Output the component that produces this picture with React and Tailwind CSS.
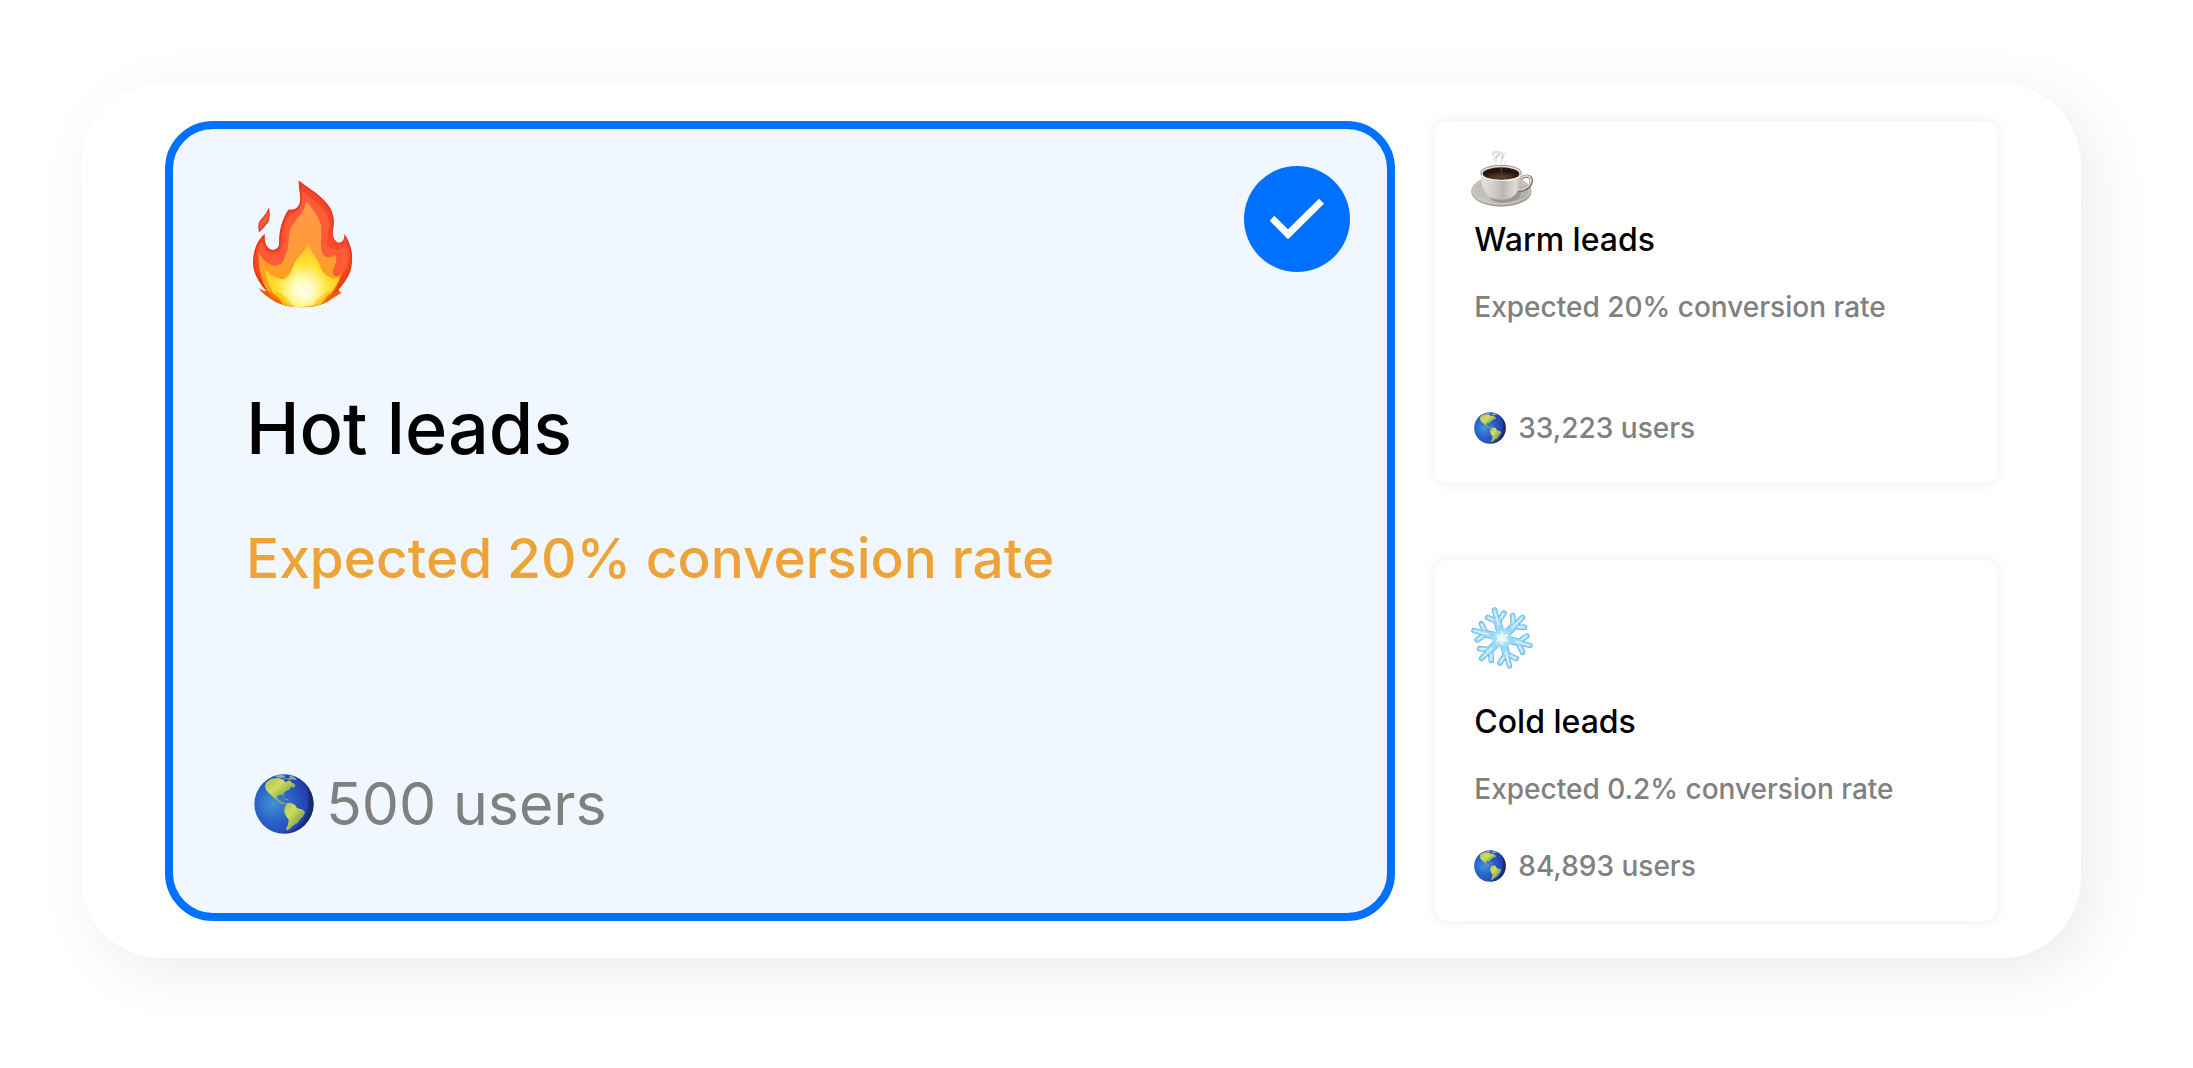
import React, { useState } from 'react';

function FireIcon({ className }) {
    return (
        <svg viewBox="66 56 302 388" className={className} aria-hidden="true">
            <defs>
                <linearGradient id="fireOuter" x1="0" y1="0" x2="0" y2="1">
                    <stop offset="0" stopColor="#f0452a" />
                    <stop offset="0.55" stopColor="#f9482a" />
                    <stop offset="0.8" stopColor="#ee4708" />
                    <stop offset="1" stopColor="#f58a10" />
                </linearGradient>
                <linearGradient id="fireMiddle" x1="0" y1="0" x2="0" y2="1">
                    <stop offset="0" stopColor="#ff9a4c" />
                    <stop offset="0.5" stopColor="#ff9b35" />
                    <stop offset="1" stopColor="#fca800" />
                </linearGradient>
                <radialGradient id="fireCore" gradientUnits="userSpaceOnUse" cx="218" cy="385" r="145">
                    <stop offset="0" stopColor="#fffde0" />
                    <stop offset="0.25" stopColor="#fff9a8" />
                    <stop offset="0.55" stopColor="#ffe02c" />
                    <stop offset="1" stopColor="#ffb428" />
                </radialGradient>
                <radialGradient id="fireGlow" gradientUnits="userSpaceOnUse" cx="220" cy="390" r="75">
                    <stop offset="0" stopColor="#fffff0" />
                    <stop offset="0.4" stopColor="#fffcc0" stopOpacity="0.85" />
                    <stop offset="1" stopColor="#ffe94a" stopOpacity="0" />
                </radialGradient>
                <clipPath id="fireClip">
                    <path d="M206 60C238 88 312 120 311 186C310 200 306 214 309 228C314 244 326 250 334 244C341 240 343 230 342 220C360 245 368 280 365 304C362 345 341 366 325 386C326 394 330 396 335 393C326 404 308 410 298 418C276 433 248 438 222 439C180 441 142 432 113 408C103 400 92 392 86 382C94 388 104 391 110 391C84 364 70 336 69 304C69 270 84 236 104 220C103 242 106 263 127 268C136 269 143 263 147 254C146 214 155 178 175 147C198 152 212 136 210 112C210 92 205 80 206 60Z" />
                </clipPath>
            </defs>
            <g clipPath="url(#fireClip)">
                <rect x="60" y="50" width="315" height="400" fill="url(#fireOuter)" />
                <path d="M206 60C238 88 312 120 311 186C304 224 316 250 334 244L342 220C360 245 368 280 365 304C362 345 341 366 325 386C300 418 258 438 222 439C160 440 118 404 100 378C76 350 70 330 69 304C69 270 84 236 104 220C103 242 106 263 127 268C136 269 143 263 147 254C146 214 155 178 175 147C198 152 212 136 210 112Z" fill="none" stroke="#dc2812" strokeWidth="9" opacity="0.55" />
                <path d="M214 92C250 115 292 145 298 185C294 230 282 250 300 262C322 272 344 262 346 246C362 290 352 330 330 348L280 330L120 330L84 286C80 270 90 250 98 244C100 268 116 280 134 280C152 276 160 262 158 242C158 205 166 180 182 160C206 156 220 130 214 92Z" fill="#ff623d" opacity="0.75" />
                <path d="M229 122C248 148 276 178 273 206C274 236 268 262 279 282C290 294 306 290 317 284C322 304 310 320 307 336C312 348 322 349 333 340C324 376 302 402 282 424L200 442L128 412C94 372 84 326 86 276C96 296 116 314 136 315C158 312 162 298 167 280C178 260 174 230 180 206C194 176 222 160 229 122Z" fill="url(#fireMiddle)" />
                <path d="M236 238C232 264 260 290 265 306C272 324 278 340 296 348C304 356 318 352 328 352C314 386 286 414 254 432L200 442L150 420C120 390 108 352 104 326C120 340 138 354 158 356C182 350 180 334 190 316C200 284 232 272 236 238Z" fill="url(#fireCore)" />
                <path d="M86 380C112 390 150 405 192 440L110 430ZM336 390C300 398 272 410 242 440L310 430Z" fill="#ef650b" opacity="0.75" />
                <path d="M130 388C158 398 178 416 196 440L160 434ZM304 388C276 398 256 414 240 440L270 434Z" fill="#ffc000" opacity="0.8" />
                <circle cx="220" cy="390" r="75" fill="url(#fireGlow)" />
            </g>
            <path d="M116 146C118 156 118 168 116 178C110 190 98 202 88 212C86 204 86 194 88 186C96 172 110 164 116 146Z" fill="#f75840" stroke="#dc3020" strokeWidth="3" />
        </svg>
    );
}

function CoffeeIcon({ className }) {
    return (
        <svg viewBox="60 110 192 192" className={className} aria-hidden="true">
            <defs>
                <linearGradient id="cupBody" x1="0" y1="0" x2="1" y2="0">
                    <stop offset="0" stopColor="#e2e0da" />
                    <stop offset="0.3" stopColor="#d2d0c8" />
                    <stop offset="0.55" stopColor="#bab7ae" />
                    <stop offset="0.85" stopColor="#dddbd4" />
                    <stop offset="1" stopColor="#b5b2a9" />
                </linearGradient>
                <linearGradient id="cupSaucer" x1="0" y1="0" x2="1" y2="1">
                    <stop offset="0" stopColor="#b9b7b1" />
                    <stop offset="0.5" stopColor="#c6c4bd" />
                    <stop offset="1" stopColor="#a09d95" />
                </linearGradient>
                <radialGradient id="cupCoffee" cx="0.5" cy="0.75" r="0.6">
                    <stop offset="0" stopColor="#65432d" />
                    <stop offset="0.6" stopColor="#41281a" />
                    <stop offset="1" stopColor="#20130d" />
                </radialGradient>
            </defs>
            <ellipse cx="154" cy="241" rx="90" ry="45" fill="#99968f" />
            <ellipse cx="154" cy="238" rx="90" ry="45" fill="url(#cupSaucer)" />
            <ellipse cx="154" cy="238" rx="84" ry="39" fill="none" stroke="#d0cec7" strokeWidth="3" />
            <path d="M120 262Q160 290 210 258L214 238L150 250Z" fill="#8b8880" opacity="0.65" />
            <path d="M212 202C230 188 248 195 243 214C238 230 220 237 204 238" fill="none" stroke="#77746d" strokeWidth="10" />
            <path d="M212 201C230 187 246 195 242 212C236 228 219 235 203 236" fill="none" stroke="#dedcd6" strokeWidth="5" />
            <path d="M92 184C92 216 100 244 122 258C140 268 170 268 187 257C208 242 215 214 215 184Z" fill="url(#cupBody)" />
            <ellipse cx="153" cy="184" rx="62" ry="23" fill="#e4e2dc" />
            <ellipse cx="153" cy="184" rx="61" ry="22" fill="none" stroke="#999690" strokeWidth="3" />
            <ellipse cx="153" cy="187" rx="55" ry="19" fill="#291a12" />
            <ellipse cx="153" cy="190" rx="51" ry="15" fill="url(#cupCoffee)" />
            <path d="M95 190C104 212 204 213 212 190" fill="none" stroke="#f1f0ec" strokeWidth="4" />
            <g fill="none" stroke="#a3a3a3" strokeLinecap="round">
                <path d="M128 130C134 118 150 120 148 130C144 138 136 134 132 142M150 124C160 128 164 132 156 140" strokeWidth="7" opacity="0.35" />
                <path d="M134 150C146 146 134 140 142 130M152 156C160 146 148 144 162 134M154 184C156 174 152 168 155 160" strokeWidth="4" opacity="0.3" />
                <path d="M164 124L170 132M138 160L142 154M166 150L162 160" strokeWidth="3" opacity="0.3" />
            </g>
        </svg>
    );
}

function SnowflakeIcon({ className }) {
    const angles = [-15, 45, 105, 165, 225, 285];
    return (
        <svg viewBox="-95 -95 190 190" className={className} aria-hidden="true">
            <defs>
                <radialGradient id="snowCenter">
                    <stop offset="0" stopColor="#f2fbff" />
                    <stop offset="0.5" stopColor="#b0e4fa" />
                    <stop offset="1" stopColor="#8fd4f8" stopOpacity="0" />
                </radialGradient>
            </defs>
            <g fill="none" strokeLinecap="round" strokeLinejoin="round">
                {angles.map((angle) => (
                    <g key={angle} transform={`rotate(${angle})`} stroke="#5aabe0">
                        <path d="M0 0V-54" strokeWidth="23" />
                        <path d="M0 -50V-86M0 -48L25 -70M0 -48L-25 -70" strokeWidth="16" />
                    </g>
                ))}
                {angles.map((angle) => (
                    <g key={angle} transform={`rotate(${angle})`} stroke="#96daFb">
                        <path d="M0 0V-54" strokeWidth="19" />
                        <path d="M0 -50V-86M0 -48L25 -70M0 -48L-25 -70" strokeWidth="12" />
                    </g>
                ))}
                {angles.map((angle) => (
                    <path
                        key={angle}
                        d="M0 -42V-83M12 -58L23 -69M-12 -58L-23 -69"
                        transform={`rotate(${angle})`}
                        stroke="#dcecfd"
                        strokeWidth="5"
                    />
                ))}
            </g>
            <circle r="36" fill="url(#snowCenter)" />
            <path d="M0 -22L5 -7L20 -12L10 0L20 12L5 8L0 22L-6 8L-20 12L-10 0L-20 -12L-5 -7Z" fill="#eefaff" opacity="0.8" />
        </svg>
    );
}

function GlobeIcon({ className }) {
    return (
        <svg viewBox="42 40 176 176" className={className} aria-hidden="true">
            <defs>
                <radialGradient id="globeSea" cx="0.32" cy="0.5" r="0.72">
                    <stop offset="0" stopColor="#4494d4" />
                    <stop offset="0.35" stopColor="#2b68cc" />
                    <stop offset="0.75" stopColor="#2346b4" />
                    <stop offset="1" stopColor="#1b2462" />
                </radialGradient>
                <linearGradient id="globeLand" x1="0" y1="0" x2="1" y2="1">
                    <stop offset="0" stopColor="#9cbf5c" />
                    <stop offset="0.35" stopColor="#d4dc60" />
                    <stop offset="0.65" stopColor="#90b050" />
                    <stop offset="1" stopColor="#a58d20" />
                </linearGradient>
                <clipPath id="globeClip">
                    <circle cx="130" cy="128" r="87" />
                </clipPath>
            </defs>
            <g clipPath="url(#globeClip)">
                <rect x="40" y="38" width="180" height="180" fill="url(#globeSea)" />
                <path d="M78 64L92 54L112 52L128 56L134 64L146 58L154 66L164 72L160 80L150 78L146 86L136 90L128 98L130 106L122 100L112 102L108 110L116 118L126 122L136 126L132 130L120 126L108 116L98 108L88 98L78 88L74 76Z" fill="url(#globeLand)" />
                <path d="M102 46L120 42L136 46L128 50L140 54L148 50L144 44L160 48L168 58L156 56L140 56L126 52L110 50Z" fill="#a5b7a4" opacity="0.85" />
                <path d="M138 126L150 124L162 130L168 140L184 144L192 152L186 164L178 172L170 184L158 190L148 200L138 206L136 200L142 188L144 174L136 164L130 150L132 138Z" fill="url(#globeLand)" />
                <path d="M126 111L138 113L148 117L138 117Z" fill="#8fac61" />
                <path d="M214 98L220 98V138L215 130Z" fill="#826d2d" />
                <path d="M196 66A87 87 0 0 1 130 215C184 200 216 150 196 66Z" fill="#101539" opacity="0.35" />
            </g>
        </svg>
    );
}

function CheckBadge() {
    return (
        <svg viewBox="0 0 106 106" className="absolute top-[37px] right-[37px] size-[106px]" aria-hidden="true">
            <circle cx="53" cy="53" r="53" fill="#0070ff" />
            <path d="M25.7 54.7L44 73.3L80 37.7L75 32.7L44 63.3L30.3 49.7Z" fill="#fff" />
        </svg>
    );
}

const smallSegments = [
    { id: 'warm', title: 'Warm leads', text: 'Expected 20% conversion rate', users: '33,223 users', Icon: CoffeeIcon, spacing: 'pt-[27px] gap-2' },
    { id: 'cold', title: 'Cold leads', text: 'Expected 0.2% conversion rate', users: '84,893 users', Icon: SnowflakeIcon, spacing: 'pt-[46px] gap-8' },
];

function FeaturedCard({ selected, onSelect }) {
    return (
        <label
            className={`relative flex flex-col items-start rounded-[48px] border-8 pt-[50px] pb-[73px] pl-[73px] pr-12 cursor-pointer ${
                selected ? 'border-[#0070ff] bg-[#f0f7ff]' : 'border-gray-100 bg-white'
            }`}
        >
            <input type="radio" name="segment" className="sr-only" checked={selected} onChange={() => onSelect('hot')} />
            {selected && <CheckBadge />}
            <FireIcon className="ml-1.5 h-[130px] w-[101px]" />
            <span className="mt-[75px] text-[72px] leading-[88px] font-medium text-black">Hot leads</span>
            <span className="mt-[50px] mb-40 text-[55px] leading-[72px] font-medium text-[#eda338]">Expected 20% conversion rate</span>
            <span className="mt-auto flex items-center gap-3 pl-2 text-[59px] leading-[72px] text-[#808080]">
                <GlobeIcon className="size-[60px]" />
                500 users
            </span>
        </label>
    );
}

function SegmentCard({ segment, selected, onSelect }) {
    const { id, title, text, users, Icon, spacing } = segment;
    return (
        <label
            className={`flex flex-col items-start rounded-xl px-[39px] pb-[35px] shadow-[0_0_12px_rgba(0,0,0,0.08)] cursor-pointer ${spacing} ${
                selected ? 'bg-[#f0f7ff]' : 'bg-white'
            }`}
        >
            <input type="radio" name="segment" className="sr-only" checked={selected} onChange={() => onSelect(id)} />
            <Icon className="-ml-1 size-16" />
            <span className="flex flex-col gap-[27px]">
                <span className="text-[32px] leading-10 font-medium text-black">{title}</span>
                <span className="text-[28px] leading-10 font-medium text-[#808080]">{text}</span>
            </span>
            <span className="mt-auto flex items-center gap-3 text-[28px] leading-10 font-medium text-[#808080]">
                <GlobeIcon className="size-8" />
                {users}
            </span>
        </label>
    );
}

export default function App() {
    const [selected, setSelected] = useState('hot');

    return (
        <main className="min-h-screen bg-white pt-21 pr-28 pb-[110px] pl-[81px] font-['Inter',sans-serif]">
            <div
                role="radiogroup"
                aria-label="Leads"
                className="grid min-h-[874px] grid-cols-[1231fr_562fr] gap-10 rounded-[80px] bg-white px-21 py-[37px] shadow-[14px_14px_60px_rgba(0,0,0,0.08)]"
            >
                <FeaturedCard selected={selected === 'hot'} onSelect={setSelected} />
                <div className="grid grid-rows-2 gap-[77px]">
                    {smallSegments.map((segment) => (
                        <SegmentCard key={segment.id} segment={segment} selected={selected === segment.id} onSelect={setSelected} />
                    ))}
                </div>
            </div>
        </main>
    );
}
